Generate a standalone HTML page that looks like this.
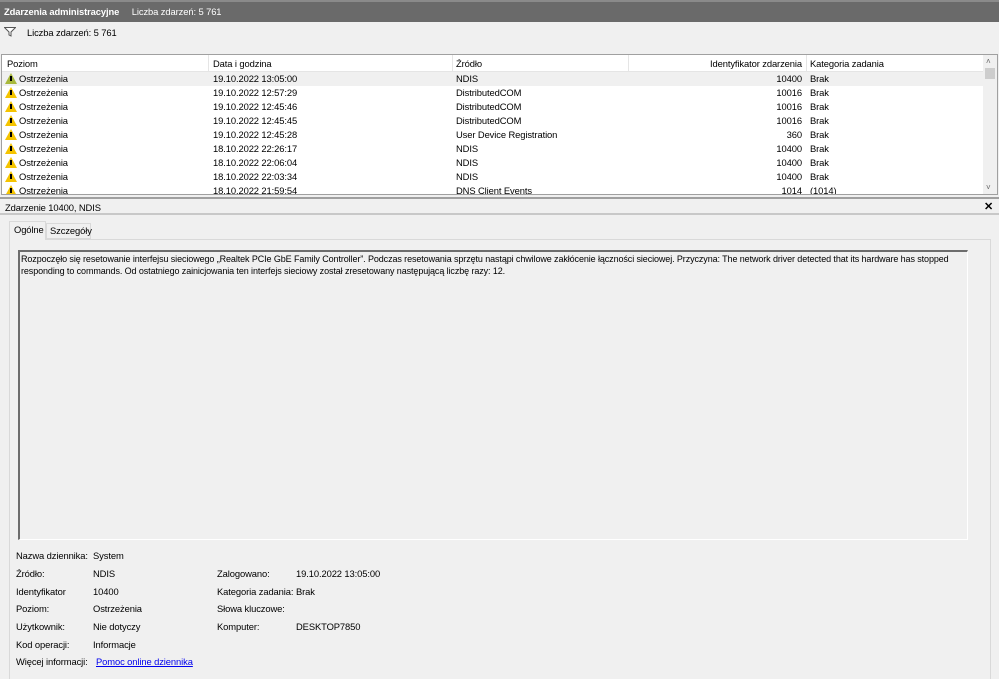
<!DOCTYPE html>
<html><head><meta charset="utf-8"><style>
*{margin:0;padding:0;box-sizing:border-box}
body{width:999px;height:679px;background:#f0f0f0;font-family:"Liberation Sans",sans-serif;font-size:9.4px;letter-spacing:-0.1px;color:#000;position:relative;overflow:hidden}
.abs{position:absolute;white-space:nowrap}
.top{left:0;top:0;width:999px;height:22px;background:#6a6a6a;border-top:2px solid #8a8a8a;color:#fff;padding:4px 4px}
.tbl{left:1px;top:54px;width:997px;height:141px;background:#fff;border:1px solid #a0a0a0;overflow:hidden}
.hdr{position:absolute;top:0;left:0;width:982px;height:17px;border-bottom:1px solid #e5e5e5}
.hdr div{position:absolute;top:3px}
.sep{position:absolute;top:0;width:1px;height:17px;background:#e5e5e5}
.row{position:absolute;left:0;width:982px;height:14px}
.row div{position:absolute;top:1px}
.warn{position:absolute;left:3px;top:1px;width:0;height:0;border-left:6px solid transparent;border-right:6px solid transparent;border-bottom:11px solid #f5c400}
.warn i{position:absolute;left:-1px;top:3px;width:2px;height:5px;background:#000;font-style:normal}
.sb{position:absolute;right:0;top:0;width:14px;height:139px;background:#f0f0f0}
.det{left:0;top:197px;width:999px;height:18px;border-top:2px solid #a0a0a0;border-bottom:2px solid #c8c8c8;padding:3px 5px}
.box{left:18px;top:250px;width:950px;height:290px;border:1px solid #a0a0a0;border-right-color:#fff;border-bottom-color:#fff;border-left:2px solid #6d6d6d;border-top:2px solid #6d6d6d;padding:1px 1px;white-space:normal;line-height:12px;font-size:9px;letter-spacing:-0.1px}
</style></head><body>
<div class="abs top"><b>Zdarzenia administracyjne</b>&nbsp;&nbsp;&nbsp;&nbsp;&nbsp;Liczba zdarzeń: 5 761</div>
<svg class="abs" style="left:4px;top:27px" width="12" height="10"><path d="M0.5 0.5H11.5L7 5V9L5 8V5Z" fill="#fff" stroke="#555"/></svg>
<div class="abs" style="left:27px;top:27px">Liczba zdarzeń: 5 761</div>
<div class="abs tbl">
<div class="hdr"><div style="left:5px">Poziom</div><span class="sep" style="left:206px"></span><div style="left:211px">Data i godzina</div><span class="sep" style="left:450px"></span><div style="left:454px">Źródło</div><span class="sep" style="left:626px"></span><div style="right:182px">Identyfikator zdarzenia</div><span class="sep" style="left:804px"></span><div style="left:808px">Kategoria zadania</div></div>
<div class="row" style="top:17px;background:#f0f0f0"><span class="warn" style="border-bottom-color:#a8b83c"><i></i></span><div style="left:17px">Ostrzeżenia</div><div style="left:211px">19.10.2022 13:05:00</div><div style="left:454px">NDIS</div><div style="right:182px">10400</div><div style="left:808px">Brak</div></div>
<div class="row" style="top:31px"><span class="warn"><i></i></span><div style="left:17px">Ostrzeżenia</div><div style="left:211px">19.10.2022 12:57:29</div><div style="left:454px">DistributedCOM</div><div style="right:182px">10016</div><div style="left:808px">Brak</div></div>
<div class="row" style="top:45px"><span class="warn"><i></i></span><div style="left:17px">Ostrzeżenia</div><div style="left:211px">19.10.2022 12:45:46</div><div style="left:454px">DistributedCOM</div><div style="right:182px">10016</div><div style="left:808px">Brak</div></div>
<div class="row" style="top:59px"><span class="warn"><i></i></span><div style="left:17px">Ostrzeżenia</div><div style="left:211px">19.10.2022 12:45:45</div><div style="left:454px">DistributedCOM</div><div style="right:182px">10016</div><div style="left:808px">Brak</div></div>
<div class="row" style="top:73px"><span class="warn"><i></i></span><div style="left:17px">Ostrzeżenia</div><div style="left:211px">19.10.2022 12:45:28</div><div style="left:454px">User Device Registration</div><div style="right:182px">360</div><div style="left:808px">Brak</div></div>
<div class="row" style="top:87px"><span class="warn"><i></i></span><div style="left:17px">Ostrzeżenia</div><div style="left:211px">18.10.2022 22:26:17</div><div style="left:454px">NDIS</div><div style="right:182px">10400</div><div style="left:808px">Brak</div></div>
<div class="row" style="top:101px"><span class="warn"><i></i></span><div style="left:17px">Ostrzeżenia</div><div style="left:211px">18.10.2022 22:06:04</div><div style="left:454px">NDIS</div><div style="right:182px">10400</div><div style="left:808px">Brak</div></div>
<div class="row" style="top:115px"><span class="warn"><i></i></span><div style="left:17px">Ostrzeżenia</div><div style="left:211px">18.10.2022 22:03:34</div><div style="left:454px">NDIS</div><div style="right:182px">10400</div><div style="left:808px">Brak</div></div>
<div class="row" style="top:129px"><span class="warn"><i></i></span><div style="left:17px">Ostrzeżenia</div><div style="left:211px">18.10.2022 21:59:54</div><div style="left:454px">DNS Client Events</div><div style="right:182px">1014</div><div style="left:808px">(1014)</div></div>
<div class="sb"><div style="position:absolute;left:3px;top:2px;font-size:8px;color:#666">˄</div><div style="position:absolute;left:2px;top:13px;width:10px;height:11px;background:#cdcdcd"></div><div style="position:absolute;left:3px;bottom:2px;font-size:8px;color:#666">˅</div></div>
</div>
<div class="abs det">Zdarzenie 10400, NDIS</div>
<div class="abs" style="left:984px;top:200px;font-weight:bold;font-size:11px">✕</div>
<div class="abs" style="left:9px;top:239px;width:982px;height:440px;border:1px solid #d9d9d9;border-bottom:none"></div>
<div class="abs" style="left:9px;top:221px;width:37px;height:19px;background:#f0f0f0;border:1px solid #d9d9d9;border-bottom:none;padding:2px 4px">Ogólne</div>
<div class="abs" style="left:46px;top:223px;width:45px;height:16px;background:#f0f0f0;border:1px solid #d9d9d9;padding:1px 3px">Szczegóły</div>
<div class="abs box">Rozpoczęło się resetowanie interfejsu sieciowego „Realtek PCIe GbE Family Controller”. Podczas resetowania sprzętu nastąpi chwilowe zakłócenie łączności sieciowej. Przyczyna: The network driver detected that its hardware has stopped responding to commands. Od ostatniego zainicjowania ten interfejs sieciowy został zresetowany następującą liczbę razy: 12.</div>
<div class="abs" style="left:16px;top:550px">Nazwa dziennika:</div><div class="abs" style="left:93px;top:550px">System</div>
<div class="abs" style="left:16px;top:568px">Źródło:</div><div class="abs" style="left:93px;top:568px">NDIS</div>
<div class="abs" style="left:217px;top:568px">Zalogowano:</div><div class="abs" style="left:296px;top:568px">19.10.2022 13:05:00</div>
<div class="abs" style="left:16px;top:586px">Identyfikator</div><div class="abs" style="left:93px;top:586px">10400</div>
<div class="abs" style="left:217px;top:586px">Kategoria zadania:</div><div class="abs" style="left:296px;top:586px">Brak</div>
<div class="abs" style="left:16px;top:603px">Poziom:</div><div class="abs" style="left:93px;top:603px">Ostrzeżenia</div>
<div class="abs" style="left:217px;top:603px">Słowa kluczowe:</div>
<div class="abs" style="left:16px;top:621px">Użytkownik:</div><div class="abs" style="left:93px;top:621px">Nie dotyczy</div>
<div class="abs" style="left:217px;top:621px">Komputer:</div><div class="abs" style="left:296px;top:621px">DESKTOP7850</div>
<div class="abs" style="left:16px;top:639px">Kod operacji:</div><div class="abs" style="left:93px;top:639px">Informacje</div>
<div class="abs" style="left:16px;top:656px">Więcej informacji:</div><div class="abs" style="left:96px;top:656px;color:#0000ee;text-decoration:underline">Pomoc online dziennika</div>
</body></html>
